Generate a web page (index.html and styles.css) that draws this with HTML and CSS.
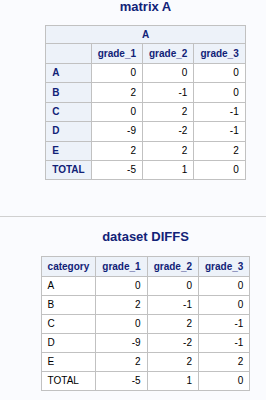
FILE: index.html
```html
<!DOCTYPE html>
<html>
<head>
<meta charset="utf-8">
<link rel="stylesheet" href="styles.css">
</head>
<body>
<div class="output first">
  <h2 class="title">matrix A</h2>
  <table class="grid">
    <thead>
      <tr class="span-row"><th class="hdr" colspan="4">A</th></tr>
      <tr class="col-row"><th class="hdr"></th><th class="hdr">grade_1</th><th class="hdr">grade_2</th><th class="hdr">grade_3</th></tr>
    </thead>
    <tbody>
      <tr><th class="rowhdr">A</th><td class="num">0</td><td class="num">0</td><td class="num">0</td></tr>
      <tr><th class="rowhdr">B</th><td class="num">2</td><td class="num">-1</td><td class="num">0</td></tr>
      <tr><th class="rowhdr">C</th><td class="num">0</td><td class="num">2</td><td class="num">-1</td></tr>
      <tr><th class="rowhdr">D</th><td class="num">-9</td><td class="num">-2</td><td class="num">-1</td></tr>
      <tr><th class="rowhdr">E</th><td class="num">2</td><td class="num">2</td><td class="num">2</td></tr>
      <tr><th class="rowhdr">TOTAL</th><td class="num">-5</td><td class="num">1</td><td class="num">0</td></tr>
    </tbody>
  </table>
</div>
<div class="separator"></div>
<div class="output second">
  <h2 class="title">dataset DIFFS</h2>
  <table class="grid data">
    <thead>
      <tr class="col-row"><th class="hdr">category</th><th class="hdr">grade_1</th><th class="hdr">grade_2</th><th class="hdr">grade_3</th></tr>
    </thead>
    <tbody>
      <tr><td class="txt">A</td><td class="num">0</td><td class="num">0</td><td class="num">0</td></tr>
      <tr><td class="txt">B</td><td class="num">2</td><td class="num">-1</td><td class="num">0</td></tr>
      <tr><td class="txt">C</td><td class="num">0</td><td class="num">2</td><td class="num">-1</td></tr>
      <tr><td class="txt">D</td><td class="num">-9</td><td class="num">-2</td><td class="num">-1</td></tr>
      <tr><td class="txt">E</td><td class="num">2</td><td class="num">2</td><td class="num">2</td></tr>
      <tr><td class="txt">TOTAL</td><td class="num">-5</td><td class="num">1</td><td class="num">0</td></tr>
    </tbody>
  </table>
</div>
</body>
</html>
```

FILE: styles.css
```css
html, body {
  margin: 0;
  padding: 0;
  background: #fafbfe;
}

body {
  font-family: "Liberation Sans", Arial, sans-serif;
  font-size: 10px;
  color: #000;
}

.output {
  padding-left: 25px;
  display: flex;
  flex-direction: column;
  align-items: center;
}

.title {
  margin: 0;
  font-size: 13px;
  line-height: 15px;
  font-weight: bold;
  color: #112277;
  text-align: center;
}

.first .title {
  margin-top: -1px;
  margin-bottom: 11px;
}

.second .title {
  margin-top: 12px;
  margin-bottom: 12px;
}

.separator {
  margin-top: 36px;
  border-top: 1px solid #d0d0d0;
}

.grid {
  border-collapse: collapse;
  border: 1px solid #c1c1c1;
  background: #fff;
}

.grid th,
.grid td {
  border: 1px solid #c1c1c1;
  padding: 0 6px;
  height: 19.4px;
  line-height: 12px;
  white-space: nowrap;
  box-sizing: border-box;
}

.grid .hdr {
  background: #edf2f9;
  color: #112277;
  font-weight: bold;
  text-align: center;
}

.span-row .hdr {
  height: 18px;
}

.first .col-row .hdr {
  height: 20px;
}

.data .col-row .hdr {
  height: 20px;
}

.data td {
  height: 19px;
}

.grid .rowhdr {
  background: #edf2f9;
  color: #112277;
  font-weight: bold;
  text-align: left;
}

.grid .num {
  text-align: right;
}

.grid .txt {
  text-align: left;
}
```
